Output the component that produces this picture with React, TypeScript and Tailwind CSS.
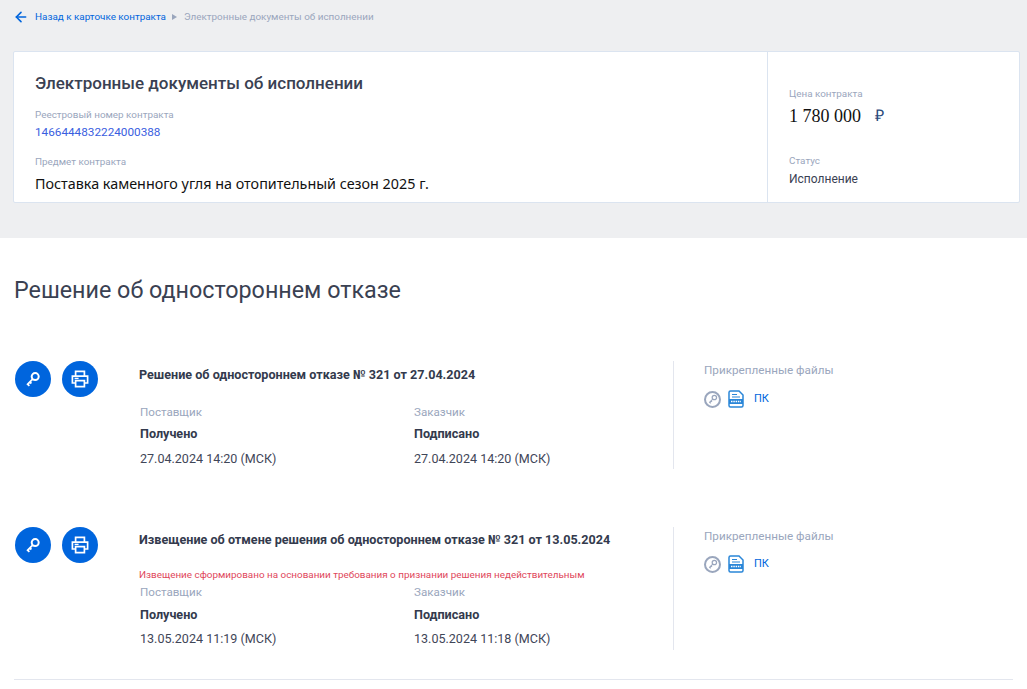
import React from 'react';
import { ArrowLeft } from 'lucide-react';

interface PartyInfo {
  label: string;
  status: string;
  date: string;
}

const KeyGlyph = ({ className }: { className?: string }) => (
  <svg viewBox="0 0 16 16" fill="none" stroke="currentColor" strokeWidth="2" className={className}>
    <circle cx="10.2" cy="5.6" r="3.5" />
    <path d="M7.6 8.2 2 13.8M2.6 13.2l1.8 1.6M4.8 11l1.6 1.5" strokeWidth="1.8" />
  </svg>
);

const PrinterGlyph = ({ className }: { className?: string }) => (
  <svg viewBox="0 0 18 18" fill="none" stroke="currentColor" strokeWidth="1.7" className={className}>
    <path d="M4.6 6V1.4h8.8V6" />
    <path d="M4.4 13H1.4V6.2h15.2V13h-3" />
    <path d="M4.6 10.6h8.800v6H4.600z" />
    <path d="M3.600 8.400h4" strokeWidth="1.400" />
  </svg>
);

const RoundButton = ({ children }: { children: React.ReactNode }) => (
  <button className="flex h-[36px] w-[36px] items-center justify-center rounded-full bg-[#0065dd] text-white">
    {children}
  </button>
);

const FileIcon = () => (
  <svg viewBox="0 0 16 18" fill="none" className="h-[18px] w-[16px]">
    <path d="M1 2.500A1.500 1.500 0 0 1 2.500 1H11l4 4v10.500a1.500 1.500 0 0 1-1.500 1.500h-11A1.500 1.500 0 0 1 1 15.500z" stroke="#2a86d8" strokeWidth="1.500" />
    <path d="M4 4.500h5M4 7h8" stroke="#2a86d8" strokeWidth="1.200" />
    <rect x="1" y="9" width="14" height="5" fill="#2a86d8" />
    <path d="M3 11.500h10" stroke="#fff" strokeWidth="1.400" strokeDasharray="1.500 0.800" />
  </svg>
);

const Party = ({ label, status, date, compact }: PartyInfo & { compact?: boolean }) => (
  <div className="w-[274px] shrink-0">
    <div className="text-[11.600px] leading-[16px] text-[#9aa6bd]">{label}</div>
    <div className={`text-[12.600px] font-bold leading-[16px] text-[#333a4d] ${compact ? 'mt-[7px]' : 'mt-[6px]'}`}>{status}</div>
    <div className={`text-[12.550px] leading-[16px] text-[#3f4658] ${compact ? 'mt-[8px]' : 'mt-[9px]'}`}>{date}</div>
  </div>
);

const DocumentRow = ({
  title,
  note,
  left,
  right,
  className,
}: {
  title: string;
  note?: string;
  left: PartyInfo;
  right: PartyInfo;
  className?: string;
}) => (
  <div className={`flex ${className ?? ''}`}>
    <div className="flex w-[125px] gap-[11px] pl-[1px] pt-[1px]">
      <RoundButton><KeyGlyph className="h-[16px] w-[16px]" /></RoundButton>
      <RoundButton><PrinterGlyph className="h-[18px] w-[18px]" /></RoundButton>
    </div>
    <div className={`w-[534px] ${note ? 'pt-[6px]' : 'pt-[7px]'}`}>
      <h3 className="text-[12.600px] font-bold leading-[16px] text-[#333a4d]">{title}</h3>
      {note ? (
        <>
          <p className="mt-[21px] text-[9.900px] leading-[12px] text-[#e0475b]">{note}</p>
          <div className="ml-[1px] mt-[3px] flex">
            <Party {...left} compact />
            <Party {...right} compact />
          </div>
        </>
      ) : (
        <div className="ml-[1px] mt-[21px] flex">
          <Party {...left} />
          <Party {...right} />
        </div>
      )}
    </div>
    <div className={`mt-[1px] border-l border-[#e3e6ee] pl-[30px] ${note ? 'h-[123px]' : 'h-[108px]'}`}>
      <div className="pt-[1px] text-[11.700px] leading-[16px] text-[#9aa6bd]">Прикрепленные файлы</div>
      <div className={`flex items-center ${note ? 'mt-[11px]' : 'mt-[12px]'}`}>
        <span className="flex h-[17px] w-[17px] items-center justify-center rounded-full border-2 border-[#9aa6bd] text-[#9aa6bd]">
          <KeyGlyph className="h-[10px] w-[10px]" />
        </span>
        <span className="ml-[7px]"><FileIcon /></span>
        <a className="ml-[10px] text-[11px] leading-[16px] text-[#0065dd]">ПК</a>
      </div>
    </div>
  </div>
);

export default function App() {
  return (
    <div className="min-h-[689px] bg-white font-['Roboto',sans-serif]">
      <div className="h-[238px] bg-[#eeeff1] px-[13px] pt-[9px]">
        <nav className="flex h-[16px] items-center text-[9.900px]">
          <ArrowLeft className="h-[16px] w-[16px] text-[#0065dd]" strokeWidth={2.4} />
          <a className="ml-[6px] text-[#0065dd]">Назад к карточке контракта</a>
          <span className="ml-[6px] h-0 w-0 border-y-[3.500px] border-l-[5px] border-y-transparent border-l-[#9aa6bd]" />
          <span className="ml-[7px] text-[#9aa6bd]">Электронные документы об исполнении</span>
        </nav>
        <section className="mt-[26px] flex h-[152px] w-[1007px] rounded-[2px] border border-[#dbe4f0] bg-white">
          <div className="w-[754px] border-r border-[#dbe4f0] pl-[21px] pt-[21px]">
            <h1 className="text-[17px] font-medium leading-[20px] text-[#3a4152]">Электронные документы об исполнении</h1>
            <div className="mt-[15px] text-[9.900px] leading-[14px] text-[#9aa6bd]">Реестровый номер контракта</div>
            <a className="mt-[3px] block text-[11.750px] leading-[14px] text-[#3a5ee0]">1466444832224000388</a>
            <div className="mt-[16px] text-[9.900px] leading-[14px] text-[#9aa6bd]">Предмет контракта</div>
            <p className="mt-[5px] font-['Noto_Sans',sans-serif] text-[14.350px] leading-[20px] text-[#111]">Поставка каменного угля на отопительный сезон 2025 г.</p>
          </div>
          <div className="flex-1 pl-[21px] pt-[35px]">
            <div className="text-[9.900px] leading-[14px] text-[#9aa6bd]">Цена контракта</div>
            <div className="mt-[5px] flex items-center font-['Liberation_Serif',serif] text-[18px] leading-[20px] text-[#111]">
              1 780 000
              <span className="ml-[14px] text-[16px] text-[#2c4a7c]">₽</span>
            </div>
            <div className="mt-[28px] text-[9.900px] leading-[14px] text-[#9aa6bd]">Статус</div>
            <div className="mt-[3px] text-[12px] leading-[16px] text-[#3a4152]">Исполнение</div>
          </div>
        </section>
      </div>
      <main className="px-[14px]">
        <h2 className="mt-[37px] text-[23.300px] leading-[30px] text-[#3a4152]">Решение об одностороннем отказе</h2>
        <DocumentRow
          className="mt-[55px]"
          title="Решение об одностороннем отказе № 321 от 27.04.2024"
          left={{ label: 'Поставщик', status: 'Получено', date: '27.04.2024 14:20 (МСК)' }}
          right={{ label: 'Заказчик', status: 'Подписано', date: '27.04.2024 14:20 (МСК)' }}
        />
        <DocumentRow
          className="mt-[57px]"
          title="Извещение об отмене решения об одностороннем отказе № 321 от 13.05.2024"
          note="Извещение сформировано на основании требования о признании решения недействительным"
          left={{ label: 'Поставщик', status: 'Получено', date: '13.05.2024 11:19 (МСК)' }}
          right={{ label: 'Заказчик', status: 'Подписано', date: '13.05.2024 11:18 (МСК)' }}
        />
        <div className="mt-[29px] border-t border-[#e3e6ee]" />
      </main>
    </div>
  );
}
